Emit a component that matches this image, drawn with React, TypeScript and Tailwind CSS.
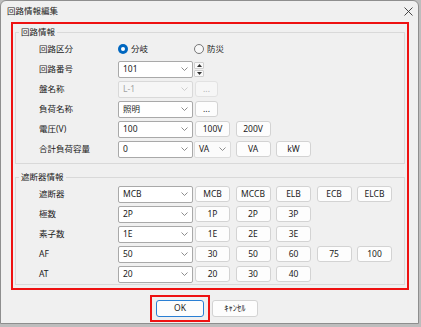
import React from "react";
import clsx from "clsx";

const Chevron = ({ disabled }: { disabled?: boolean }) => (
  <svg width="7" height="4" viewBox="0 0 7 4" className="shrink-0">
    <path
      d="M0.5 0.5 L3.5 3.5 L6.5 0.5"
      fill="none"
      stroke={disabled ? "#c8c8c8" : "#808080"}
      strokeWidth="0.9"
    />
  </svg>
);

const Combo = ({
  value,
  disabled,
  light,
  className,
}: {
  value: string;
  disabled?: boolean;
  light?: boolean;
  className?: string;
}) => (
  <div
    className={clsx(
      "flex h-[17px] shrink-0 items-center justify-between rounded-[2px] border pl-[4px] pr-[4px]",
      disabled
        ? "border-[#d9d9d9] bg-[#f6f6f6] text-[#a3a3a3]"
        : light
        ? "border-[#dcdcdc] bg-[#fbfbfb] text-[#1b1b1b]"
        : "border-[#a9a9a9] bg-white text-[#1b1b1b]",
      className ?? "w-[75px]"
    )}
  >
    <span>{value}</span>
    <Chevron disabled={disabled} />
  </div>
);

const Btn = ({
  label,
  disabled,
  className,
}: {
  label: string;
  disabled?: boolean;
  className?: string;
}) => (
  <div
    className={clsx(
      "flex h-[16px] shrink-0 items-center justify-center rounded-[3px] border",
      disabled
        ? "border-[#e2e2e2] bg-[#f6f6f6] text-[#b0b0b0]"
        : "border-[#d3d3d3] bg-[#fdfdfd] text-[#1b1b1b]",
      className ?? "w-[35px]"
    )}
  >
    {label}
  </div>
);

const Row = ({ label, children }: { label: string; children: React.ReactNode }) => (
  <div className="flex h-[20px] items-center">
    <div className="w-[79px] shrink-0 text-[#1b1b1b]">{label}</div>
    {children}
  </div>
);

const Radio = ({ checked, label }: { checked?: boolean; label: string }) => (
  <div className="flex items-center gap-[3px]">
    <svg width="10" height="10" viewBox="0 0 10 10">
      {checked ? (
        <>
          <circle cx="5" cy="5" r="5" fill="#0067c0" />
          <circle cx="5" cy="5" r="2" fill="#ffffff" />
        </>
      ) : (
        <circle cx="5" cy="5" r="4.5" fill="#f8f8f8" stroke="#6a6a6a" strokeWidth="0.9" />
      )}
    </svg>
    <span className="text-[#1b1b1b]">{label}</span>
  </div>
);

const Spinner = () => (
  <div className="ml-[1px] flex h-[15px] w-[10px] flex-col gap-[1px]">
    {[0, 1].map((i) => (
      <div
        key={i}
        className="flex flex-1 items-center justify-center rounded-[1px] border border-[#cfcfcf] bg-[#fafafa]"
      >
        <svg width="5" height="3" viewBox="0 0 5 3">
          <path d={i === 0 ? "M0 3 L2.5 0 L5 3 Z" : "M0 0 L2.5 3 L5 0 Z"} fill="#333" />
        </svg>
      </div>
    ))}
  </div>
);

const Group = ({
  title,
  className,
  children,
}: {
  title: string;
  className?: string;
  children: React.ReactNode;
}) => (
  <fieldset className={clsx("mx-[2px] w-[390px] border border-[#d9d9d9]", className)}>
    <legend className="ml-[3px] px-[2px] leading-[12px] text-[#1b1b1b]">{title}</legend>
    {children}
  </fieldset>
);

export default function App() {
  return (
    <div className="min-h-screen bg-[#bdbdbd] font-['Noto_Sans','Noto_Sans_CJK_JP',sans-serif] text-[8.5px] leading-none">
      <div className="flex h-[324px] w-[419px] flex-col rounded-t-[6px] border border-[#8e8e8e] bg-[#f0f0f0]">
        {/* title bar */}
        <div className="flex h-[21px] shrink-0 items-center justify-between pl-[6px] pr-[5px]">
          <span className="text-[#1b1b1b]">回路情報編集</span>
          <svg width="9" height="9" viewBox="0 0 9 9">
            <path d="M0.5 0.5 L8.5 8.5 M8.5 0.5 L0.5 8.5" stroke="#333" strokeWidth="0.9" />
          </svg>
        </div>

        {/* main panel */}
        <div className="pl-[10px]">
          <div className="h-[268px] w-[398px] border-2 border-[#ee1111]">
            <Group title="回路情報" className="mt-[2px] pb-[4px]">
              <div className="pl-[23px] pt-[1px]">
                <Row label="回路区分">
                  <div className="flex items-center">
                    <div className="w-[76px]">
                      <Radio checked label="分岐" />
                    </div>
                    <Radio label="防災" />
                  </div>
                </Row>
                <Row label="回路番号">
                  <Combo value="101" />
                  <Spinner />
                </Row>
                <Row label="盤名称">
                  <Combo value="L-1" disabled />
                  <Btn label="..." disabled className="ml-[2px] w-[23px]" />
                </Row>
                <Row label="負荷名称">
                  <Combo value="照明" />
                  <Btn label="..." className="ml-[2px] w-[23px]" />
                </Row>
                <Row label="電圧(V)">
                  <Combo value="100" />
                  <div className="ml-[2px] flex gap-[5.5px]">
                    <Btn label="100V" />
                    <Btn label="200V" />
                  </div>
                </Row>
                <Row label="合計負荷容量">
                  <Combo value="0" />
                  <Combo value="VA" light className="ml-[1px] w-[37px]" />
                  <div className="ml-[4.5px] flex gap-[5.5px]">
                    <Btn label="VA" />
                    <Btn label="kW" />
                  </div>
                </Row>
              </div>
            </Group>

            <Group title="遮断器情報" className="mt-[7px]">
              <div className="pl-[23px] pt-[1px]">
                <Row label="遮断器">
                  <Combo value="MCB" />
                  <div className="ml-[2px] flex gap-[5.5px]">
                    <Btn label="MCB" />
                    <Btn label="MCCB" />
                    <Btn label="ELB" />
                    <Btn label="ECB" />
                    <Btn label="ELCB" />
                  </div>
                </Row>
                <Row label="極数">
                  <Combo value="2P" />
                  <div className="ml-[2px] flex gap-[5.5px]">
                    <Btn label="1P" />
                    <Btn label="2P" />
                    <Btn label="3P" />
                  </div>
                </Row>
                <Row label="素子数">
                  <Combo value="1E" />
                  <div className="ml-[2px] flex gap-[5.5px]">
                    <Btn label="1E" />
                    <Btn label="2E" />
                    <Btn label="3E" />
                  </div>
                </Row>
                <Row label="AF">
                  <Combo value="50" />
                  <div className="ml-[2px] flex gap-[5.5px]">
                    <Btn label="30" />
                    <Btn label="50" />
                    <Btn label="60" />
                    <Btn label="75" />
                    <Btn label="100" />
                  </div>
                </Row>
                <Row label="AT">
                  <Combo value="20" />
                  <div className="ml-[2px] flex gap-[5.5px]">
                    <Btn label="20" />
                    <Btn label="30" />
                    <Btn label="40" />
                  </div>
                </Row>
              </div>
            </Group>
          </div>
        </div>

        {/* footer buttons */}
        <div className="flex items-center pl-[149px] pt-[5px]">
          <div className="flex h-[27px] items-center border-2 border-[#ee1111] px-[4px]">
            <div className="flex h-[17px] w-[48px] items-center justify-center rounded-[3px] border border-[#2a7fd4] bg-[#fdfdfd] text-[#1b1b1b]">
              OK
            </div>
          </div>
          <div className="ml-[2px] flex h-[17px] w-[46px] items-center justify-center rounded-[3px] border border-[#d3d3d3] bg-[#fdfdfd] text-[#1b1b1b]">
            ｷｬﾝｾﾙ
          </div>
        </div>
      </div>
    </div>
  );
}
